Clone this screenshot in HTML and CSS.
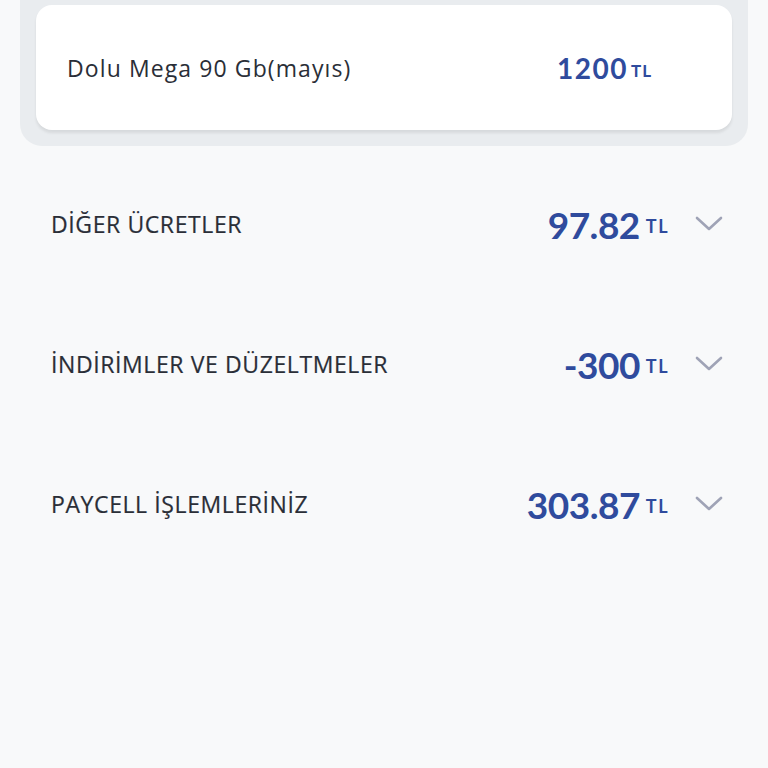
FILE: index.html
```html
<!DOCTYPE html>
<html lang="tr">
<head>
    <meta charset="UTF-8">
    <meta name="viewport" content="width=device-width, initial-scale=1.0">
    <title>Fatura Detayı</title>
    <link rel="stylesheet" href="styles.css">
</head>
<body>
    <div class="package-box">
        <div class="package-card">
            <span class="package-name">Dolu Mega 90 Gb(mayıs)</span>
            <span class="amount amount-small">1200<span class="currency">TL</span></span>
        </div>
    </div>

    <div class="fee-list">
        <div class="fee-row">
            <span class="fee-label">DİĞER ÜCRETLER</span>
            <div class="fee-right">
                <span class="amount">97.82<span class="currency">TL</span></span>
                <svg class="chevron" viewBox="0 0 28 16" width="28" height="16"><path d="M2 2 L14 13 L26 2" fill="none" stroke="#9fa3b6" stroke-width="2.6" stroke-linecap="round" stroke-linejoin="round"/></svg>
            </div>
        </div>
        <div class="fee-row">
            <span class="fee-label">İNDİRİMLER VE DÜZELTMELER</span>
            <div class="fee-right">
                <span class="amount">-300<span class="currency">TL</span></span>
                <svg class="chevron" viewBox="0 0 28 16" width="28" height="16"><path d="M2 2 L14 13 L26 2" fill="none" stroke="#9fa3b6" stroke-width="2.6" stroke-linecap="round" stroke-linejoin="round"/></svg>
            </div>
        </div>
        <div class="fee-row">
            <span class="fee-label">PAYCELL İŞLEMLERİNİZ</span>
            <div class="fee-right">
                <span class="amount">303.87<span class="currency">TL</span></span>
                <svg class="chevron" viewBox="0 0 28 16" width="28" height="16"><path d="M2 2 L14 13 L26 2" fill="none" stroke="#9fa3b6" stroke-width="2.6" stroke-linecap="round" stroke-linejoin="round"/></svg>
            </div>
        </div>
    </div>
</body>
</html>
```

FILE: styles.css
```css
body {
    margin: 0;
    font-family: "Open Sans", "Noto Sans", sans-serif;
    background-color: #f8f9fa;
    color: #2a2e37;
    height: 768px;
    overflow: hidden;
}

.package-box {
    margin: -20px 20px 0 20px;
    padding: 25px 16px 16px 16px;
    background-color: #e9ecef;
    border-radius: 0 0 22px 22px;
}

.package-card {
    height: 125px;
    box-sizing: border-box;
    padding: 0 80px 0 31px;
    background-color: #fff;
    border-radius: 16px;
    box-shadow: 0 3px 3px rgba(0, 0, 0, 0.08);
    display: flex;
    align-items: center;
    justify-content: space-between;
}

.package-name {
    font-size: 23px;
    letter-spacing: 1.1px;
}

.amount {
    font-family: "Lato", sans-serif;
    color: #2f4b9d;
    font-weight: 700;
    font-size: 37px;
    letter-spacing: -0.5px;
    white-space: nowrap;
}

.currency {
    font-size: 18px;
    margin-left: 6px;
    letter-spacing: 1.5px;
    vertical-align: 6px;
}

.amount-small {
    font-size: 28px;
    letter-spacing: 1.5px;
}

.amount-small .currency {
    font-size: 17px;
    margin-left: 3px;
    letter-spacing: 1px;
    vertical-align: 2px;
}

.fee-list {
    padding: 58px 45px 0 51px;
    display: flex;
    flex-direction: column;
    gap: 100px;
}

.fee-row {
    height: 40px;
    display: flex;
    align-items: center;
    justify-content: space-between;
}

.fee-label {
    font-size: 23px;
    font-weight: 500;
    letter-spacing: 0.6px;
    -webkit-text-stroke: 0.2px #2a2e37;
}

.fee-right {
    display: flex;
    align-items: center;
    gap: 26px;
}

.chevron {
    display: block;
}
```
